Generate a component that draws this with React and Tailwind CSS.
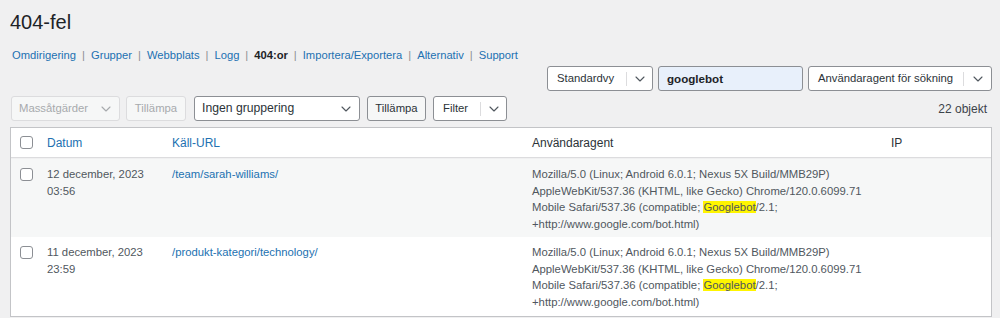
import React from "react";

const Chevron = ({ className = "" }) => (
  <svg width="10" height="6" viewBox="0 0 10 6" className={className} fill="none">
    <path d="M1 1l4 4 4-4" stroke="currentColor" strokeWidth="1.1" strokeLinecap="round" strokeLinejoin="round" />
  </svg>
);

const Checkbox = () => (
  <div className="w-[13px] h-[13px] rounded-[3px] border border-[#8c8f94] bg-white" />
);

const UA = () => (
  <>
    Mozilla/5.0 (Linux; Android 6.0.1; Nexus 5X Build/MMB29P)
    <br />
    AppleWebKit/537.36 (KHTML, like Gecko) Chrome/120.0.6099.71
    <br />
    Mobile Safari/537.36 (compatible; <span className="bg-[#fff500]">Googlebot</span>/2.1;
    <br />
    +http://www.google.com/bot.html)
  </>
);

const rows = [
  { date: "12 december, 2023", time: "03:56", url: "/team/sarah-williams/", bg: "bg-[#f6f7f7]" },
  { date: "11 december, 2023", time: "23:59", url: "/produkt-kategori/technology/", bg: "bg-white" },
];

const navItems = ["Omdirigering", "Grupper", "Webbplats", "Logg", "404:or", "Importera/Exportera", "Alternativ", "Support"];

export default function App() {
  return (
    <div
      className="w-[1000px] h-[318px] overflow-hidden bg-[#f0f0f1] pl-[10px] pr-[8px] text-[#3c434a]"
      style={{ fontFamily: '"Liberation Sans", Arial, sans-serif' }}
    >
      <h1 className="pt-[10px] text-[20px] leading-[24px] text-[#1d2327] font-normal">404-fel</h1>
      <div className="mt-[13px] pl-[2px] flex items-center text-[11.2px] leading-[16px]">
        {navItems.map((n, i) => (
          <React.Fragment key={n}>
            {i > 0 && <span className="mx-[6px] text-[#8c8f94]">|</span>}
            {n === "404:or" ? (
              <span className="font-bold text-[#1d2327]">{n}</span>
            ) : (
              <span className="text-[#2271b1]">{n}</span>
            )}
          </React.Fragment>
        ))}
      </div>

      <div className="mt-[3px] flex justify-end gap-[5px] text-[11.3px]">
        <div className="w-[106px] h-[25px] flex items-center border border-[#8c8f94] rounded-[3px] bg-white text-[#2c3338]">
          <span className="pl-[9px] flex-1">Standardvy</span>
          <span className="w-px h-[14px] bg-[#dcdcde]" />
          <span className="w-[25px] flex justify-center text-[#50575e]"><Chevron /></span>
        </div>
        <div className="w-[145px] h-[25px] flex items-center border border-[#8c8f94] rounded-[3px] bg-[#e8f0fb] text-[#1d2327] pl-[8px] text-[11.6px] font-bold">
          googlebot
        </div>
        <div className="w-[184px] h-[25px] flex items-center border border-[#8c8f94] rounded-[3px] bg-white text-[#2c3338]">
          <span className="pl-[9px] flex-1">Användaragent för sökning</span>
          <span className="w-px h-[14px] bg-[#dcdcde]" />
          <span className="w-[27px] flex justify-center text-[#50575e]"><Chevron /></span>
        </div>
      </div>

      <div className="mt-[5px] flex items-center text-[11.3px]">
        <div className="ml-[1px] w-[109px] h-[25px] flex items-center border border-[#dcdcde] rounded-[3px] bg-[#f6f7f7] text-[#a7aaad]">
          <span className="pl-[7px] flex-1">Massåtgärder</span>
          <span className="w-[26px] flex justify-center"><Chevron /></span>
        </div>
        <div className="ml-[6px] w-[60px] h-[25px] flex items-center justify-center border border-[#dcdcde] rounded-[3px] bg-[#f6f7f7] text-[#a7aaad]">
          Tillämpa
        </div>
        <div className="ml-[8px] w-[166px] h-[25px] flex items-center border border-[#8c8f94] rounded-[3px] bg-white text-[#2c3338]">
          <span className="pl-[7px] flex-1 text-[12.2px]">Ingen gruppering</span>
          <span className="w-[26px] flex justify-center text-[#50575e]"><Chevron /></span>
        </div>
        <div className="ml-[7px] w-[59px] h-[25px] flex items-center justify-center border border-[#8c8f94] rounded-[3px] bg-[#f6f7f7] text-[#2c3338]">
          Tillämpa
        </div>
        <div className="ml-[7px] w-[74px] h-[25px] flex items-center border border-[#8c8f94] rounded-[3px] bg-white text-[#2c3338]">
          <span className="pl-[9px] flex-1">Filter</span>
          <span className="w-px h-[14px] bg-[#dcdcde]" />
          <span className="w-[25px] flex justify-center text-[#50575e]"><Chevron /></span>
        </div>
        <div className="ml-auto mr-[5px] text-[12px] text-[#3c434a]">22 objekt</div>
      </div>

      <div className="mt-[6px] border border-[#c3c4c7] bg-white text-[11.3px]">
        <div className="grid grid-cols-[36px_125px_360px_359px_1fr] h-[30px] items-center border-b border-[#dcdcde] text-[12px]">
          <div className="pl-[9px]"><Checkbox /></div>
          <div className="text-[#2271b1]">Datum</div>
          <div className="text-[#2271b1]">Käll-URL</div>
          <div className="text-[#2c3338]">Användaragent</div>
          <div className="text-[#2c3338]">IP</div>
        </div>
        {rows.map((r, i) => (
          <div
            key={i}
            className={`grid grid-cols-[36px_125px_360px_359px_1fr] h-[79px] pt-[7px] leading-[16.5px] ${r.bg} ${i === 0 ? "border-t border-[#f0f0f1]" : ""}`}
          >
            <div className="pl-[9px] pt-[2px]"><Checkbox /></div>
            <div className="text-[#50575e]">
              {r.date}
              <br />
              {r.time}
            </div>
            <div className="text-[#2271b1]">{r.url}</div>
            <div className="text-[#50575e]"><UA /></div>
            <div />
          </div>
        ))}
      </div>
    </div>
  );
}
